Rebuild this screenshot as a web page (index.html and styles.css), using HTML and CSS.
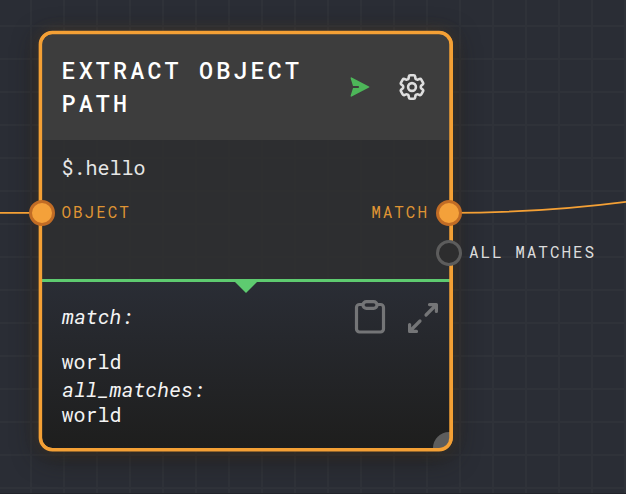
FILE: index.html
```
<!DOCTYPE html>
<html lang="en">
<head>
<meta charset="utf-8">
<title>Extract Object Path</title>
<link rel="stylesheet" href="styles.css">
</head>
<body>
<main class="canvas">
  <section class="node">
    <header class="node-header">
      <h1 class="title">Extract Object Path</h1>
      <div class="actions">
        <svg class="run-icon" viewBox="0 0 20 20"><path d="M.6 1.2Q.6 0 1.7.5L19 9.4Q20 10 19 10.6L1.7 19.5Q.6 20 .6 18.8L3 11H8.8V9H3Z"/></svg>
        <svg class="gear-icon" viewBox="2 2 20 20"><path d="M9.594 3.94c.09-.542.56-.94 1.11-.94h2.593c.55 0 1.02.398 1.11.94l.213 1.281c.063.374.313.686.645.87.074.04.147.083.22.127.325.196.72.257 1.075.124l1.217-.456a1.125 1.125 0 0 1 1.37.49l1.296 2.247a1.125 1.125 0 0 1-.26 1.431l-1.003.827c-.293.241-.438.613-.43.992a7.723 7.723 0 0 1 0 .255c-.008.378.137.75.43.991l1.004.827c.424.35.534.955.26 1.43l-1.298 2.247a1.125 1.125 0 0 1-1.369.491l-1.217-.456c-.355-.133-.75-.072-1.076.124a6.47 6.47 0 0 1-.22.128c-.331.183-.581.495-.644.869l-.213 1.281c-.09.543-.56.94-1.11.94h-2.594c-.55 0-1.019-.398-1.11-.94l-.213-1.281c-.062-.374-.312-.686-.644-.87a6.52 6.52 0 0 1-.22-.127c-.325-.196-.72-.257-1.076-.124l-1.217.456a1.125 1.125 0 0 1-1.369-.49l-1.297-2.247a1.125 1.125 0 0 1 .26-1.431l1.004-.827c.292-.24.437-.613.43-.991a6.932 6.932 0 0 1 0-.255c.007-.38-.138-.751-.43-.992l-1.004-.827a1.125 1.125 0 0 1-.26-1.43l1.297-2.247a1.125 1.125 0 0 1 1.37-.491l1.216.456c.356.133.751.072 1.076-.124.072-.044.146-.086.22-.128.332-.183.582-.495.644-.869l.214-1.28Z"/><circle cx="12" cy="12" r="3"/></svg>
      </div>
    </header>
    <div class="node-body">
      <div class="path">$.hello</div>
      <div class="ports"><span>OBJECT</span><span>MATCH</span></div>
    </div>
    <div class="output">
      <div class="output-text">
        <div class="key first">match:</div>
        <div class="value">world</div>
        <div class="key second">all_matches:</div>
        <div class="value">world</div>
      </div>
      <div class="tools">
        <svg class="clipboard" viewBox="0 0 32 34"><rect x="2.5" y="4.5" width="27" height="27.5" rx="3"/><rect class="clip" x="9" y="1.6" width="14" height="6.8" rx="3.4"/></svg>
        <svg class="expand" viewBox="0 0 32 32"><path d="M19 13 28 4M22.5 2.6h6.9v6.9M13 19 4 28M9.5 29.4H2.6v-6.9"/></svg>
      </div>
    </div>
    <i class="resize"></i>
  </section>
  <svg class="wires" viewBox="0 0 626 494"><rect class="outline" x="40.4" y="32.5" width="410.6" height="417.3" rx="12"/><path d="M0 212.8h42M450 212.8C520 212.8 570 209 626 201.8"/></svg>
  <i class="pin pin-in"></i>
  <i class="pin pin-match"></i>
  <i class="pin pin-all"></i>
  <span class="outside-label">ALL MATCHES</span>
</main>
</body>
</html>
```
FILE: styles.css
```
* { box-sizing: border-box; }
body { margin: 0; background: #2a2d35; font-family: "Roboto Mono", "DejaVu Sans Mono", "Liberation Mono", monospace; }
.canvas {
  position: relative;
  display: flow-root;
  width: 626px;
  height: 494px;
  overflow: hidden;
  background:
    linear-gradient(#2f3239 2px, transparent 2px) 0 25px / 33px 33px,
    linear-gradient(90deg, #2f3239 2px, transparent 2px) -3px 0 / 33px 33px,
    #2a2d35;
  border-bottom: 1px solid #22242a;
}
.node {
  position: relative;
  width: 414px;
  height: 420px;
  margin: 31px 0 0 39px;
  border: 3px solid #f4a035;
  border-radius: 14px;
  box-shadow: 0 0 16px rgba(244, 160, 53, .15), 0 6px 26px rgba(28, 25, 20, .75);
  overflow: hidden;
  display: flex;
  flex-direction: column;
}
.node-header {
  height: 106px;
  padding: 0 25.5px 0 19.5px;
  background: #3d3d3d;
  display: flex;
  align-items: center;
  justify-content: space-between;
}
.title {
  width: 260px;
  margin: -2px 0 0;
  color: #fff;
  font-size: 23.4px;
  font-weight: 500;
  line-height: 33px;
  letter-spacing: 3.15px;
  text-transform: uppercase;
}
.actions { display: flex; align-items: center; gap: 29px; }
.run-icon { width: 20px; height: 20px; fill: #4db659; }
.gear-icon { width: 26px; height: 26px; fill: none; stroke: #dedede; stroke-width: 2; stroke-linejoin: round; }
.node-body {
  height: 139px;
  padding: 13px 21px 0 19.5px;
  background: rgba(46, 47, 48, .96);
}
.path { color: #e6e6e6; font-size: 20px; line-height: 28px; }
.ports {
  display: flex;
  justify-content: space-between;
  margin-top: 20px;
  color: #df9434;
  font-size: 16px;
  line-height: 22px;
  letter-spacing: 1.96px;
}
.output {
  position: relative;
  flex: 1;
  display: flex;
  justify-content: space-between;
  padding: 21px 11px 0 19.5px;
  border-top: 3px solid #5ecb70;
  background: linear-gradient(#2a2d35, #1e1e1d);
}
.output::before {
  content: "";
  position: absolute;
  top: -1px;
  left: 192px;
  border: 12px solid transparent;
  border-top-color: #5ecb70;
  border-bottom: 0;
}
.output-text { color: #f4f4f4; font-size: 20px; line-height: 27px; }
.key { padding-left: .5px; font-size: 20.3px; font-style: italic; }
.value { line-height: 26px; }
.first { margin-bottom: 18px; }
.second { margin: 2px 0 -2px; }
.tools { display: flex; gap: 21px; margin-top: -1px; }
.tools svg { fill: none; stroke: #747577; stroke-width: 3.2; stroke-linecap: round; stroke-linejoin: round; }
.clipboard { width: 32px; height: 34px; margin-top: -2px; }
.clip { fill: #282a30; }
.expand { width: 32px; height: 32px; }
.resize {
  position: absolute;
  right: -15px;
  bottom: -16px;
  width: 32px;
  height: 32px;
  border-radius: 50%;
  background: #5d5d5d;
}
.wires { position: absolute; inset: 0; width: 626px; height: 494px; fill: none; stroke: #f4a035; stroke-width: 1.8; }
.outline { stroke-width: 3.5; }
.pin {
  position: absolute;
  width: 26px;
  height: 26px;
  border: 3px solid #c16c25;
  border-radius: 50%;
  background: #f4a13a;
}
.pin-in { left: 29px; top: 200px; }
.pin-match { left: 436.4px; top: 200px; }
.pin-all { left: 436.4px; top: 240px; border-color: #5c5c5c; background: #2d2d2e; }
.outside-label {
  position: absolute;
  left: 469px;
  top: 241px;
  color: #dcdcdc;
  font-size: 16px;
  line-height: 22px;
  letter-spacing: 1.96px;
}
```
